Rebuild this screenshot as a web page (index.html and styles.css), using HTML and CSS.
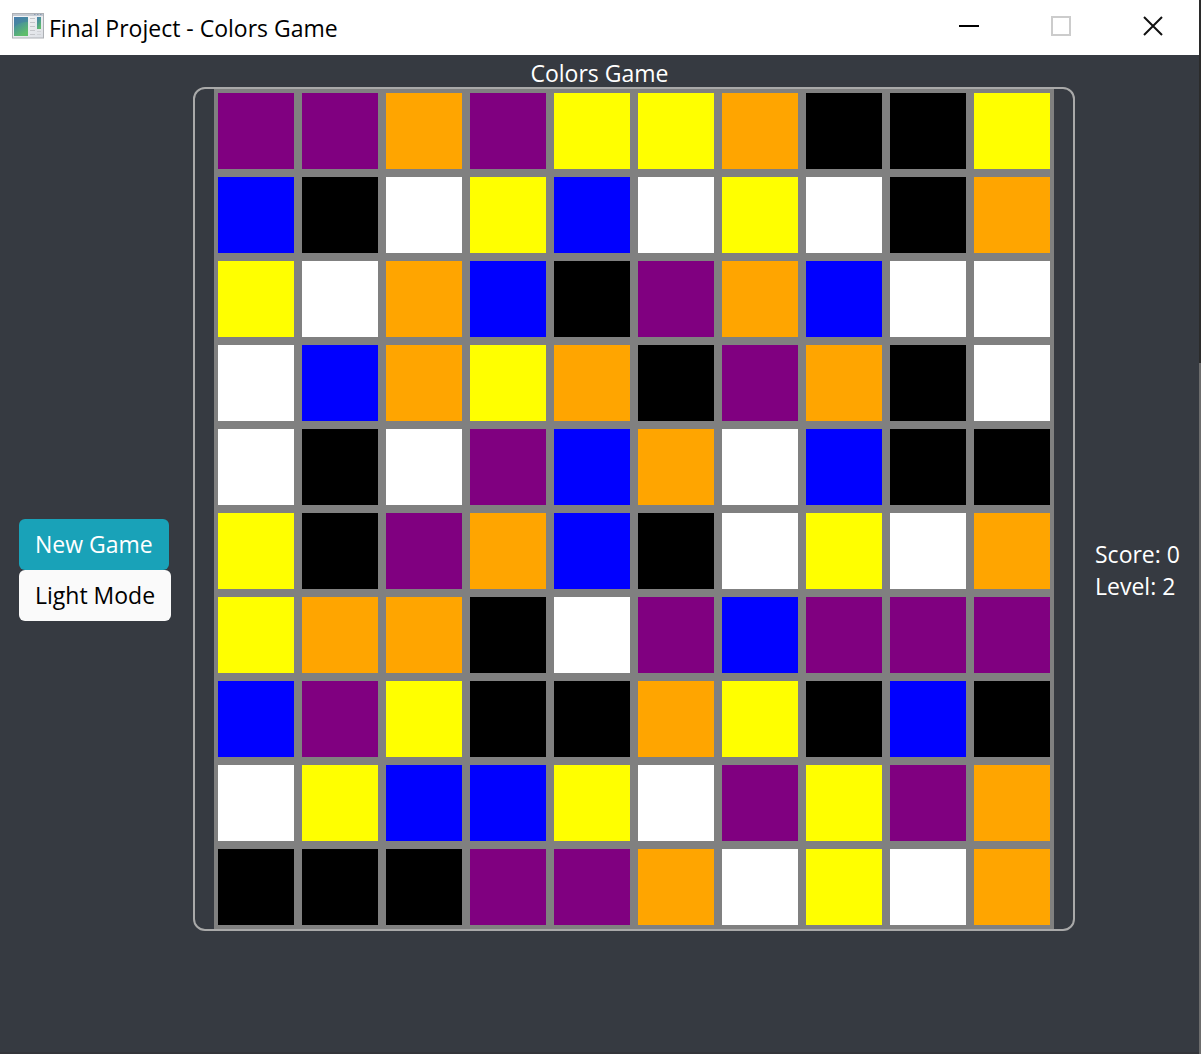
FILE: index.html
```html
<!DOCTYPE html>
<html lang="en">
<head>
<meta charset="utf-8">
<meta name="viewport" content="width=device-width, initial-scale=1">
<title>Final Project - Colors Game</title>
<link rel="stylesheet" href="styles.css">
</head>
<body>
<div class="window">
  <header class="titlebar">
    <svg class="app-icon" viewBox="0 0 32 26" aria-hidden="true">
      <defs>
        <linearGradient id="pane" x1="0" y1="0" x2="0.5" y2="1">
          <stop offset="0" stop-color="#4a7fae"/>
          <stop offset="0.45" stop-color="#4b9696"/>
          <stop offset="1" stop-color="#5fbd6b"/>
        </linearGradient>
        <linearGradient id="frame" x1="0" y1="0" x2="1" y2="1">
          <stop offset="0" stop-color="#fafafa"/>
          <stop offset="1" stop-color="#dcdfe5"/>
        </linearGradient>
      </defs>
      <rect x="0.5" y="0.5" width="31" height="24.500" fill="url(#frame)" stroke="#adb0b5"/>
      <path d="M1 2h30" stroke="#c3c9d1" stroke-width="2"/>
      <path d="M22 1.500h1.500M25 1.500h1.500M28 1.500h1.500" stroke="#8b9cb3"/>
      <rect x="2" y="4" width="14" height="19" fill="url(#pane)"/>
      <path d="M2 15C5 10 10 9 16 9V4H2z" fill="#4277a8" opacity="0.45"/>
      <path d="M18 5.500h5M18 9.500h5M18 13.500h5M18 17.500h5M18 21.500h5" stroke="#c4c6ca"/>
      <rect x="25" y="4" width="4" height="12" fill="url(#pane)"/>
      <path d="M25 18.500h4M25 21.500h4" stroke="#d0d2d6"/>
    </svg>
    <h1 class="window-title">Final Project - Colors Game</h1>
    <div class="window-controls">
      <button class="control" type="button" aria-label="Minimize"><svg viewBox="0 0 20 20"><path d="M0 10h20" stroke="#000" stroke-width="2"/></svg></button>
      <button class="control" type="button" aria-label="Maximize" disabled><svg viewBox="0 0 20 20"><rect x="1" y="1" width="18" height="18" fill="none" stroke="#ccc" stroke-width="2"/></svg></button>
      <button class="control" type="button" aria-label="Close"><svg viewBox="0 0 20 20"><path d="M1 1l18 18M19 1L1 19" stroke="#111" stroke-width="2"/></svg></button>
    </div>
  </header>
  <main class="game">
    <h2 class="game-title">Colors Game</h2>
    <div class="actions">
      <button class="btn btn-info" type="button">New Game</button>
      <button class="btn btn-light" type="button">Light Mode</button>
    </div>
    <div class="board">
      <div class="cells">
        <button class="cell purple" aria-label="Purple"></button><button class="cell purple" aria-label="Purple"></button><button class="cell orange" aria-label="Orange"></button><button class="cell purple" aria-label="Purple"></button><button class="cell yellow" aria-label="Yellow"></button><button class="cell yellow" aria-label="Yellow"></button><button class="cell orange" aria-label="Orange"></button><button class="cell black" aria-label="Black"></button><button class="cell black" aria-label="Black"></button><button class="cell yellow" aria-label="Yellow"></button>
        <button class="cell blue" aria-label="Blue"></button><button class="cell black" aria-label="Black"></button><button class="cell white" aria-label="White"></button><button class="cell yellow" aria-label="Yellow"></button><button class="cell blue" aria-label="Blue"></button><button class="cell white" aria-label="White"></button><button class="cell yellow" aria-label="Yellow"></button><button class="cell white" aria-label="White"></button><button class="cell black" aria-label="Black"></button><button class="cell orange" aria-label="Orange"></button>
        <button class="cell yellow" aria-label="Yellow"></button><button class="cell white" aria-label="White"></button><button class="cell orange" aria-label="Orange"></button><button class="cell blue" aria-label="Blue"></button><button class="cell black" aria-label="Black"></button><button class="cell purple" aria-label="Purple"></button><button class="cell orange" aria-label="Orange"></button><button class="cell blue" aria-label="Blue"></button><button class="cell white" aria-label="White"></button><button class="cell white" aria-label="White"></button>
        <button class="cell white" aria-label="White"></button><button class="cell blue" aria-label="Blue"></button><button class="cell orange" aria-label="Orange"></button><button class="cell yellow" aria-label="Yellow"></button><button class="cell orange" aria-label="Orange"></button><button class="cell black" aria-label="Black"></button><button class="cell purple" aria-label="Purple"></button><button class="cell orange" aria-label="Orange"></button><button class="cell black" aria-label="Black"></button><button class="cell white" aria-label="White"></button>
        <button class="cell white" aria-label="White"></button><button class="cell black" aria-label="Black"></button><button class="cell white" aria-label="White"></button><button class="cell purple" aria-label="Purple"></button><button class="cell blue" aria-label="Blue"></button><button class="cell orange" aria-label="Orange"></button><button class="cell white" aria-label="White"></button><button class="cell blue" aria-label="Blue"></button><button class="cell black" aria-label="Black"></button><button class="cell black" aria-label="Black"></button>
        <button class="cell yellow" aria-label="Yellow"></button><button class="cell black" aria-label="Black"></button><button class="cell purple" aria-label="Purple"></button><button class="cell orange" aria-label="Orange"></button><button class="cell blue" aria-label="Blue"></button><button class="cell black" aria-label="Black"></button><button class="cell white" aria-label="White"></button><button class="cell yellow" aria-label="Yellow"></button><button class="cell white" aria-label="White"></button><button class="cell orange" aria-label="Orange"></button>
        <button class="cell yellow" aria-label="Yellow"></button><button class="cell orange" aria-label="Orange"></button><button class="cell orange" aria-label="Orange"></button><button class="cell black" aria-label="Black"></button><button class="cell white" aria-label="White"></button><button class="cell purple" aria-label="Purple"></button><button class="cell blue" aria-label="Blue"></button><button class="cell purple" aria-label="Purple"></button><button class="cell purple" aria-label="Purple"></button><button class="cell purple" aria-label="Purple"></button>
        <button class="cell blue" aria-label="Blue"></button><button class="cell purple" aria-label="Purple"></button><button class="cell yellow" aria-label="Yellow"></button><button class="cell black" aria-label="Black"></button><button class="cell black" aria-label="Black"></button><button class="cell orange" aria-label="Orange"></button><button class="cell yellow" aria-label="Yellow"></button><button class="cell black" aria-label="Black"></button><button class="cell blue" aria-label="Blue"></button><button class="cell black" aria-label="Black"></button>
        <button class="cell white" aria-label="White"></button><button class="cell yellow" aria-label="Yellow"></button><button class="cell blue" aria-label="Blue"></button><button class="cell blue" aria-label="Blue"></button><button class="cell yellow" aria-label="Yellow"></button><button class="cell white" aria-label="White"></button><button class="cell purple" aria-label="Purple"></button><button class="cell yellow" aria-label="Yellow"></button><button class="cell purple" aria-label="Purple"></button><button class="cell orange" aria-label="Orange"></button>
        <button class="cell black" aria-label="Black"></button><button class="cell black" aria-label="Black"></button><button class="cell black" aria-label="Black"></button><button class="cell purple" aria-label="Purple"></button><button class="cell purple" aria-label="Purple"></button><button class="cell orange" aria-label="Orange"></button><button class="cell white" aria-label="White"></button><button class="cell yellow" aria-label="Yellow"></button><button class="cell white" aria-label="White"></button><button class="cell orange" aria-label="Orange"></button>
      </div>
    </div>
    <div class="stats">
      <div>Score: 0</div>
      <div>Level: 2</div>
    </div>
  </main>
</div>
</body>
</html>
```
FILE: styles.css
```css
* {
  box-sizing: border-box;
}

body {
  margin: 0;
  padding-right: 2px;
  background: linear-gradient(#2b2b2b 363px, #6c6c6c 363px);
  font-family: "Open Sans", "Noto Sans", sans-serif;
  font-size: 23px;
  line-height: 32px;
}

button {
  font: inherit;
}

.window {
  display: flex;
  flex-direction: column;
  min-height: 100vh;
  background: #363a41;
  border-bottom: 2px solid #33353a;
}

.titlebar {
  display: flex;
  align-items: center;
  height: 55px;
  padding: 0 0 3px 12px;
  background: #fff;
  color: #000;
}

.app-icon {
  width: 32px;
  height: 26px;
  margin-right: 5px;
}

.window-title,
.game-title {
  margin: 0;
  font-size: inherit;
  font-weight: 400;
}

.window-title {
  padding-top: 3px;
}

.window-controls {
  display: flex;
  margin-left: auto;
}

.control {
  display: flex;
  align-items: center;
  justify-content: center;
  width: 92px;
  height: 52px;
  padding: 0;
  border: 0;
  background: none;
}

.control svg {
  width: 20px;
  height: 20px;
}

.game {
  flex: 1;
  display: grid;
  grid-template-columns: 154px 1fr 85px;
  grid-template-rows: 32px 1fr;
  column-gap: 20px;
  padding: 0 19px;
  color: #fff;
}

.game-title {
  grid-column: 1 / -1;
  padding-top: 2px;
  text-align: center;
}

.actions {
  align-self: center;
  display: flex;
  flex-direction: column;
  align-items: flex-start;
}

.btn {
  height: 51px;
  padding: 0 16px;
  border: 0;
  border-radius: 6px;
  white-space: nowrap;
}

.btn-info {
  background: #19a2b8;
  color: #fff;
}

.btn-light {
  background: #fafafa;
  color: #000;
}

.board {
  align-self: start;
  padding: 0 19px;
  border: 2px solid #a9a9a9;
  border-radius: 12px;
}

.cells {
  display: grid;
  grid-template-columns: repeat(10, 1fr);
  background: #808080;
}

.cell {
  aspect-ratio: 1;
  padding: 0;
  border: 4px solid #808080;
}

.purple { background: #800080; }
.orange { background: #ffa500; }
.yellow { background: #ff0; }
.blue { background: #00f; }
.black { background: #000; }
.white { background: #fff; }

.stats {
  align-self: center;
  white-space: nowrap;
}
```
